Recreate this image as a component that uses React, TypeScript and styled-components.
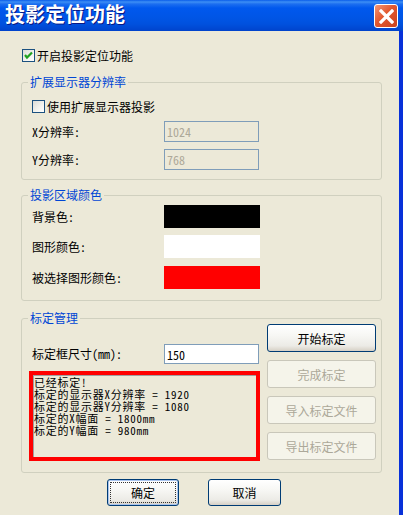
import React from "react";
import styled, { createGlobalStyle } from "styled-components";

const GlobalStyle = createGlobalStyle`
  html, body {
    margin: 0;
    padding: 0;
    background: #ece9d8;
  }
  body {
    font-family: "Noto Sans Mono CJK SC", "Noto Sans CJK SC", sans-serif;
    font-size: 12px;
    color: #000;
  }
`;

const Window = styled.div`
  width: 403px;
  height: 515px;
  display: flex;
  flex-direction: column;
  overflow: hidden;
`;

const TitleBar = styled.div`
  flex: none;
  height: 31px;
  box-sizing: border-box;
  display: flex;
  align-items: flex-start;
  justify-content: space-between;
  padding: 0 5px 0 5px;
  background: linear-gradient(
    to bottom,
    #0a5dea 0px,
    #3d8ff5 2px,
    #1c6ef0 4px,
    #0058ee 8px,
    #0055e5 18px,
    #0051de 24px,
    #0049d4 28px,
    #0043cb 31px
  );
`;

const Title = styled.div`
  margin-top: 4px;
  font-family: "Noto Sans CJK SC", sans-serif;
  font-weight: bold;
  font-size: 20px;
  line-height: 20px;
  color: #fff;
  text-shadow: 1px 1px 0 #0a1883;
`;

const CloseButton = styled.div`
  margin-top: 4px;
  width: 24px;
  height: 24px;
  box-sizing: border-box;
  border: 1px solid #fff;
  border-radius: 3px;
  background: linear-gradient(135deg, #f29676 0%, #e2582f 45%, #c9421e 100%);
  display: flex;
  align-items: center;
  justify-content: center;
`;

const Client = styled.div`
  flex: 1;
  background: #ece9d8;
  border-right: 4px solid #0831d9;
  padding: 18px 17px 0 21px;
`;

const CheckRow = styled.label<{ $indent?: number }>`
  display: flex;
  align-items: center;
  gap: 2px;
  height: 13px;
  line-height: 13px;
  margin-left: ${(p) => p.$indent ?? 0}px;
`;

const Box = styled.span`
  width: 13px;
  height: 13px;
  box-sizing: border-box;
  border: 1px solid #1c5180;
  background: linear-gradient(135deg, #dcdcd7 0%, #f4f4f0 60%, #ffffff 100%);
  display: inline-flex;
  align-items: center;
  justify-content: center;
`;

const Group = styled.fieldset<{ $top: number }>`
  margin: ${(p) => p.$top}px 0 0 0;
  padding: 0;
  min-width: 0;
  border: 1px solid #d0d0bf;
  border-radius: 3px;
`;

const Legend = styled.legend`
  margin-left: 6px;
  padding: 0 2px;
  color: #0046d5;
  font-size: 12px;
  line-height: 12px;
`;

const GroupBody = styled.div<{ $pad: string }>`
  padding: ${(p) => p.$pad};
`;

const FieldRow = styled.div<{ $top: number; $label?: number }>`
  display: grid;
  grid-template-columns: ${(p) => p.$label ?? 132}px auto;
  align-items: center;
  margin-top: ${(p) => p.$top}px;
`;

const Label = styled.span<{ $indent?: number }>`
  padding-left: ${(p) => p.$indent ?? 0}px;
  line-height: 12px;
  white-space: nowrap;
`;

const TextBox = styled.input<{ $h: number }>`
  box-sizing: border-box;
  width: 95px;
  height: ${(p) => p.$h}px;
  margin: 0;
  padding: 0 0 0 2px;
  border: 1px solid #7f9db9;
  border-radius: 0;
  background: #fff;
  color: #000;
  font: inherit;
  font-size: 12px;
  outline: none;
  &:disabled {
    background: #ece9d8;
    color: #aca899;
  }
`;

const Swatch = styled.div<{ $color: string }>`
  width: 96px;
  height: 23px;
  background: ${(p) => p.$color};
`;

const CalRow = styled.div`
  display: flex;
  gap: 7px;
`;

const CalLeft = styled.div`
  width: 231px;
  display: flex;
  flex-direction: column;
`;

const CalButtons = styled.div`
  display: flex;
  flex-direction: column;
  gap: 8px;
`;

const RedFrame = styled.div`
  margin-top: 7px;
  width: 231px;
  height: 90px;
  box-sizing: border-box;
  border: 4px solid #ff0000;
`;

const Log = styled.div`
  height: 100%;
  box-sizing: border-box;
  border-top: 1px solid #a0a0a0;
  border-left: 1px solid #a0a0a0;
  background: #ece9d8;
`;

const LogLine = styled.div`
  height: 12px;
  line-height: 12px;
  font-size: 11px;
  letter-spacing: 0.75px;
  white-space: pre;
`;

const Button = styled.button<{ $w: number; $h: number; $default?: boolean }>`
  position: relative;
  box-sizing: border-box;
  width: ${(p) => p.$w}px;
  height: ${(p) => p.$h}px;
  margin: 0;
  padding: 0;
  border: 1px solid #003c74;
  border-radius: 3px;
  background: linear-gradient(
    to bottom,
    #ffffff 0%,
    #f7f7f4 40%,
    #ecebe6 80%,
    #d6d0c5 100%
  );
  box-shadow: ${(p) => (p.$default ? "inset 0 0 0 1px #a9c4ee" : "none")};
  font: inherit;
  font-size: 12px;
  color: #000;
  &:disabled {
    border-color: #c9c7ba;
    background: #f5f4ea;
    color: #aca899;
  }
  &::after {
    content: "";
    display: ${(p) => (p.$default ? "block" : "none")};
    position: absolute;
    inset: 2px;
    border: 1px dotted #333;
    border-radius: 1px;
  }
`;

const BottomBar = styled.div`
  display: flex;
  gap: 29px;
  margin-top: 6px;
  padding-left: 86px;
`;

const Check = () => (
  <svg width="9" height="9" viewBox="0 0 9 9">
    <path d="M1 4 L3 6.5 L8 1.5" fill="none" stroke="#21a121" strokeWidth="2.2" />
  </svg>
);

const CloseIcon = () => (
  <svg width="15" height="15" viewBox="0 0 15 15">
    <path d="M2 2 L13 13 M13 2 L2 13" stroke="#fff" strokeWidth="3.2" strokeLinecap="square" />
  </svg>
);

const logLines = [
  "已经标定!",
  "标定的显示器X分辨率 = 1920",
  "标定的显示器Y分辨率 = 1080",
  "标定的X幅面 = 1800mm",
  "标定的Y幅面 = 980mm",
];

const App = () => {
  return (
    <Window>
      <GlobalStyle />
      <TitleBar>
        <Title>投影定位功能</Title>
        <CloseButton>
          <CloseIcon />
        </CloseButton>
      </TitleBar>
      <Client>
        <CheckRow $indent={1}>
          <Box>
            <Check />
          </Box>
          开启投影定位功能
        </CheckRow>

        <Group $top={14}>
          <Legend>扩展显示器分辨率</Legend>
          <GroupBody $pad="12px 0 9px 10px">
            <CheckRow>
              <Box />
              使用扩展显示器投影
            </CheckRow>
            <FieldRow $top={8}>
              <Label>X分辨率:</Label>
              <TextBox $h={21} value="1024" disabled readOnly />
            </FieldRow>
            <FieldRow $top={7}>
              <Label>Y分辨率:</Label>
              <TextBox $h={21} value="768" disabled readOnly />
            </FieldRow>
          </GroupBody>
        </Group>

        <Group $top={9}>
          <Legend>投影区域颜色</Legend>
          <GroupBody $pad="4px 0 11px 10px">
            <FieldRow $top={0}>
              <Label>背景色:</Label>
              <Swatch $color="#000000" />
            </FieldRow>
            <FieldRow $top={7}>
              <Label>图形颜色:</Label>
              <Swatch $color="#ffffff" />
            </FieldRow>
            <FieldRow $top={8}>
              <Label>被选择图形颜色:</Label>
              <Swatch $color="#ff0000" />
            </FieldRow>
          </GroupBody>
        </Group>

        <Group $top={11}>
          <Legend>标定管理</Legend>
          <GroupBody $pad="0 5px 11px 7px">
            <CalRow>
              <CalLeft>
                <FieldRow $top={20} $label={135}>
                  <Label $indent={3}>标定框尺寸(mm):</Label>
                  <TextBox $h={20} value="150" readOnly />
                </FieldRow>
                <RedFrame>
                  <Log>
                    {logLines.map((line) => (
                      <LogLine key={line}>{line}</LogLine>
                    ))}
                  </Log>
                </RedFrame>
              </CalLeft>
              <CalButtons>
                <Button $w={109} $h={28}>开始标定</Button>
                <Button $w={109} $h={28} disabled>
                  完成标定
                </Button>
                <Button $w={109} $h={28} disabled>
                  导入标定文件
                </Button>
                <Button $w={109} $h={28} disabled>
                  导出标定文件
                </Button>
              </CalButtons>
            </CalRow>
          </GroupBody>
        </Group>

        <BottomBar>
          <Button $w={72} $h={27} $default>
            确定
          </Button>
          <Button $w={73} $h={27}>取消</Button>
        </BottomBar>
      </Client>
    </Window>
  );
};

export default App;
